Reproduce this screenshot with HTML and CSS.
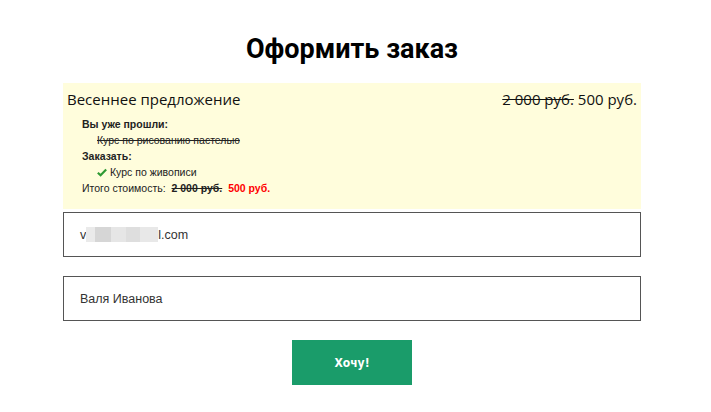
FILE: index.html
```html
<!DOCTYPE html>
<html lang="ru">
<head>
<meta charset="utf-8">
<link rel="stylesheet" href="styles.css">
</head>
<body>
<div class="page">
  <h1 class="title">Оформить заказ</h1>
  <div class="offer">
    <div class="offer-head">
      <span class="offer-name">Весеннее предложение</span>
      <span class="offer-price"><s>2 000 руб.</s> 500 руб.</span>
    </div>
    <div class="offer-body">
      <div class="label">Вы уже прошли:</div>
      <div class="item done">Курс по рисованию пастелью</div>
      <div class="label">Заказать:</div>
      <div class="item"><svg class="check" viewBox="0 0 12 10" width="10" height="9"><path d="M1 5.2 L4.3 8.3 L11 1.5" fill="none" stroke="#2e9a34" stroke-width="2.6"/></svg>Курс по живописи</div>
      <div class="total">Итого стоимость: <s class="old">2 000 руб.</s> <span class="new">500 руб.</span></div>
    </div>
  </div>
  <div class="field"><span class="email">v<span class="blur"></span>l.com</span></div>
  <div class="field">Валя Иванова</div>
  <div class="actions"><button class="btn">Хочу!</button></div>
</div>
</body>
</html>
```
FILE: styles.css
```css
html, body { margin: 0; padding: 0; background: #fff; }
.page {
  width: 578px;
  margin-left: 63px;
  padding-top: 31px;
  display: flex;
  flex-direction: column;
}
.title {
  margin: 0 0 16px;
  text-align: center;
  font-family: Roboto, sans-serif;
  font-weight: 700;
  font-size: 27px;
  line-height: 36px;
  color: #000;
}
.offer {
  background: #fffddc;
  padding: 5px 4px 12px 4px;
  height: 126px;
  box-sizing: border-box;
}
.offer-head {
  display: flex;
  justify-content: space-between;
  font-family: "Open Sans", sans-serif;
  font-size: 15px;
  line-height: 22px;
  color: #111;
}
.offer-price s { text-decoration-thickness: 1px; }
.offer-body {
  padding-left: 15px;
  padding-top: 6px;
  font-family: "Liberation Sans", Arial, sans-serif;
  font-size: 10.5px;
  line-height: 16px;
  color: #222;
}
.label { font-weight: 700; }
.item { padding-left: 15px; display: flex; align-items: center; }
.item.done { text-decoration: line-through; }
.check { margin-right: 3px; }
.old { font-weight: 700; margin-left: 3px; }
.new { font-weight: 700; color: #f00; margin-left: 3px; }
.field {
  margin-top: 3px;
  margin-bottom: 16px;
  height: 45px;
  box-sizing: border-box;
  border: 1px solid #555;
  padding: 0 16px;
  display: flex;
  align-items: center;
  font-family: "Liberation Sans", Arial, sans-serif;
  font-size: 12.5px;
  color: #333;
}
.email { display: flex; align-items: center; }
.blur { display: inline-block; width: 72px; height: 15px; background: linear-gradient(90deg, #eaeaea 0 12%, #d6d6d6 12% 35%, #e6e6e6 35% 55%, #dedede 55% 75%, #e8e8e8 75% 100%); }
.actions { display: flex; justify-content: center; margin-top: 3px; }
.btn {
  width: 120px;
  height: 45px;
  border: 0;
  background: #1a9c6a;
  color: #fff;
  font-family: "DejaVu Sans Condensed", "DejaVu Sans", sans-serif;
  font-weight: 700;
  font-size: 12px;
}
```
